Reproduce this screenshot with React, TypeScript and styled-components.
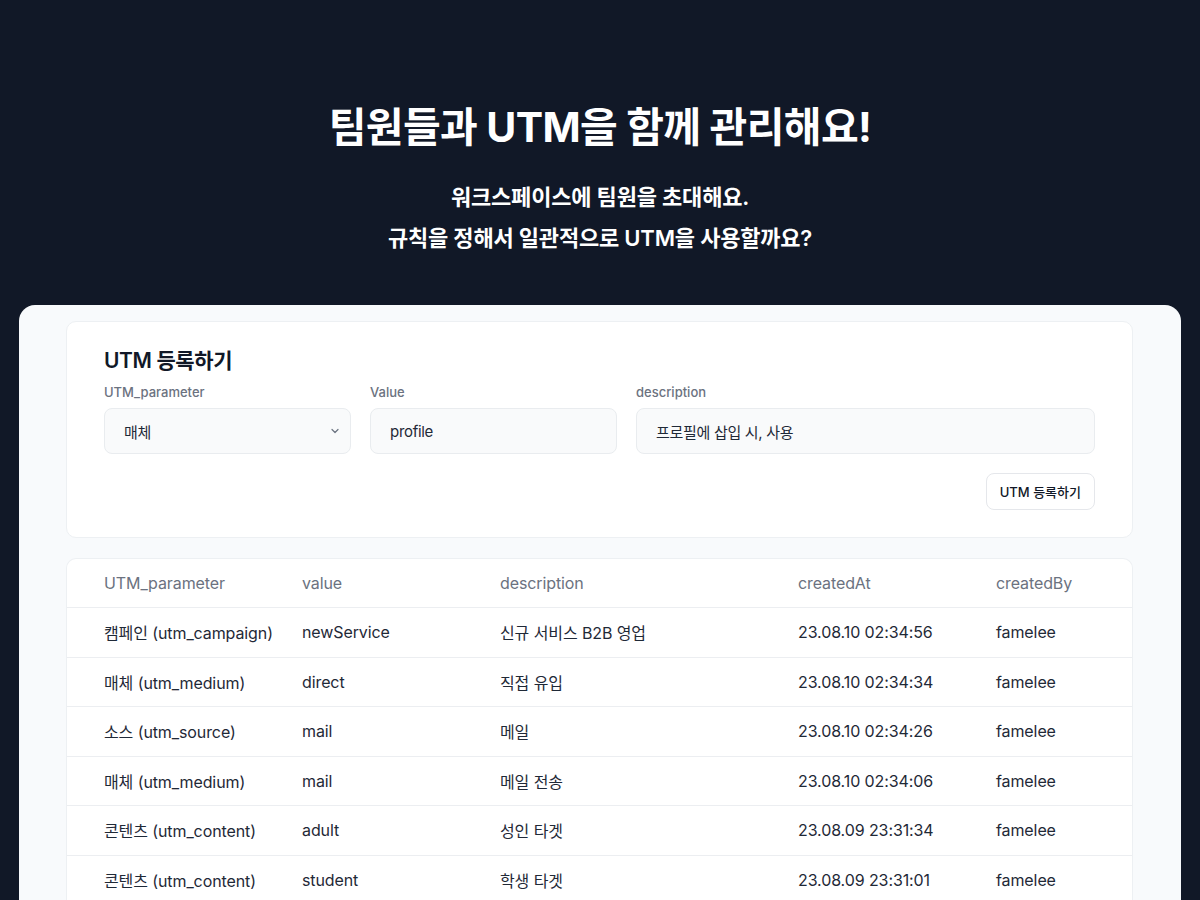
import styled, { createGlobalStyle } from "styled-components";

const GlobalStyle = createGlobalStyle`
  html, body {
    margin: 0;
    padding: 0;
    background: #111827;
  }
  body {
    font-family: Inter, "Noto Sans CJK KR", sans-serif;
    -webkit-font-smoothing: antialiased;
  }
  * {
    box-sizing: border-box;
  }
`;

const Page = styled.div`
  width: 1200px;
  height: 900px;
  overflow: hidden;
  background: #111827;
  display: flex;
  flex-direction: column;
  align-items: center;
`;

const Hero = styled.header`
  flex-shrink: 0;
  padding-top: 101px;
  height: 305px;
  display: flex;
  flex-direction: column;
  align-items: center;
  color: #ffffff;
  text-align: center;
`;

const Title = styled.h1`
  margin: 0;
  font-size: 41px;
  font-weight: 700;
  letter-spacing: -0.6px;
  line-height: 52px;
`;

const Subtitle = styled.p`
  margin: 24px 0 0;
  font-size: 22px;
  font-weight: 600;
  line-height: 41px;
  letter-spacing: -0.2px;
`;

const Panel = styled.main`
  width: 1162px;
  flex: 1;
  min-height: 0;
  background: #f8fafc;
  border-radius: 16px 16px 0 0;
  padding: 16px 48px 0 47px;
  display: flex;
  flex-direction: column;
  gap: 20px;
`;

const Card = styled.section`
  background: #ffffff;
  border: 1px solid #edf0f3;
  border-radius: 10px;
  flex-shrink: 0;
`;

const FormCard = styled(Card)`
  padding: 24px 37px 27px 37px;
  display: flex;
  flex-direction: column;
`;

const FormTitle = styled.h2`
  margin: 0;
  font-size: 21px;
  font-weight: 600;
  color: #111827;
  letter-spacing: -0.4px;
  line-height: 30px;
`;

const Fields = styled.div`
  margin-top: 8px;
  display: grid;
  grid-template-columns: 247px 247px 1fr;
  gap: 19px;
`;

const Field = styled.label`
  display: flex;
  flex-direction: column;
  gap: 8px;
`;

const Label = styled.span`
  font-size: 13px;
  font-weight: 500;
  color: #6b7280;
  line-height: 16px;
`;

const InputBox = styled.div`
  height: 46px;
  background: #f9fafb;
  border: 1px solid #e9ecef;
  border-radius: 8px;
  padding: 0 10px 0 19px;
  display: flex;
  align-items: center;
  justify-content: space-between;
  font-size: 15px;
  color: #1f2937;
  letter-spacing: -0.3px;
`;

const Chevron = styled.svg`
  width: 10px;
  height: 10px;
  color: #6b7280;
`;

const Actions = styled.div`
  display: flex;
  justify-content: flex-end;
  margin-top: 19px;
`;

const Button = styled.button`
  height: 37px;
  padding: 0 13px;
  background: #ffffff;
  border: 1px solid #e5e7eb;
  border-radius: 8px;
  font-family: inherit;
  font-size: 13px;
  font-weight: 500;
  color: #111827;
`;

const Table = styled(Card)`
  display: flex;
  flex-direction: column;
  border-bottom: none;
  border-radius: 10px 10px 0 0;
`;

const Row = styled.div<{ $head?: boolean }>`
  display: grid;
  grid-template-columns: 198px 198px 298px 198px 1fr;
  align-items: center;
  height: ${(p) => (p.$head ? "49px" : "49.5px")};
  padding: 0 37px;
  border-bottom: 1px solid #eceef1;
  font-size: 16px;
  color: ${(p) => (p.$head ? "#6b7280" : "#1f2937")};
  font-weight: 400;
  letter-spacing: -0.1px;
  white-space: nowrap;
`;

const rows = [
  ["캠페인 (utm_campaign)", "newService", "신규 서비스 B2B 영업", "23.08.10 02:34:56", "famelee"],
  ["매체 (utm_medium)", "direct", "직접 유입", "23.08.10 02:34:34", "famelee"],
  ["소스 (utm_source)", "mail", "메일", "23.08.10 02:34:26", "famelee"],
  ["매체 (utm_medium)", "mail", "메일 전송", "23.08.10 02:34:06", "famelee"],
  ["콘텐츠 (utm_content)", "adult", "성인 타겟", "23.08.09 23:31:34", "famelee"],
  ["콘텐츠 (utm_content)", "student", "학생 타겟", "23.08.09 23:31:01", "famelee"],
];

export default function App() {
  return (
    <Page>
      <GlobalStyle />
      <Hero>
        <Title>팀원들과 UTM을 함께 관리해요!</Title>
        <Subtitle>
          워크스페이스에 팀원을 초대해요.
          <br />
          규칙을 정해서 일관적으로 UTM을 사용할까요?
        </Subtitle>
      </Hero>
      <Panel>
        <FormCard>
          <FormTitle>UTM 등록하기</FormTitle>
          <Fields>
            <Field>
              <Label>UTM_parameter</Label>
              <InputBox>
                <span>매체</span>
                <Chevron viewBox="0 0 10 10" fill="none">
                  <path d="M2 3.5L5 6.5L8 3.5" stroke="currentColor" strokeWidth="1.2" strokeLinecap="round" strokeLinejoin="round" />
                </Chevron>
              </InputBox>
            </Field>
            <Field>
              <Label>Value</Label>
              <InputBox>profile</InputBox>
            </Field>
            <Field>
              <Label>description</Label>
              <InputBox>프로필에 삽입 시, 사용</InputBox>
            </Field>
          </Fields>
          <Actions>
            <Button>UTM 등록하기</Button>
          </Actions>
        </FormCard>
        <Table>
          <Row $head>
            <span>UTM_parameter</span>
            <span>value</span>
            <span>description</span>
            <span>createdAt</span>
            <span>createdBy</span>
          </Row>
          {rows.map((r, i) => (
            <Row key={i}>
              {r.map((c, j) => (
                <span key={j}>{c}</span>
              ))}
            </Row>
          ))}
        </Table>
      </Panel>
    </Page>
  );
}
